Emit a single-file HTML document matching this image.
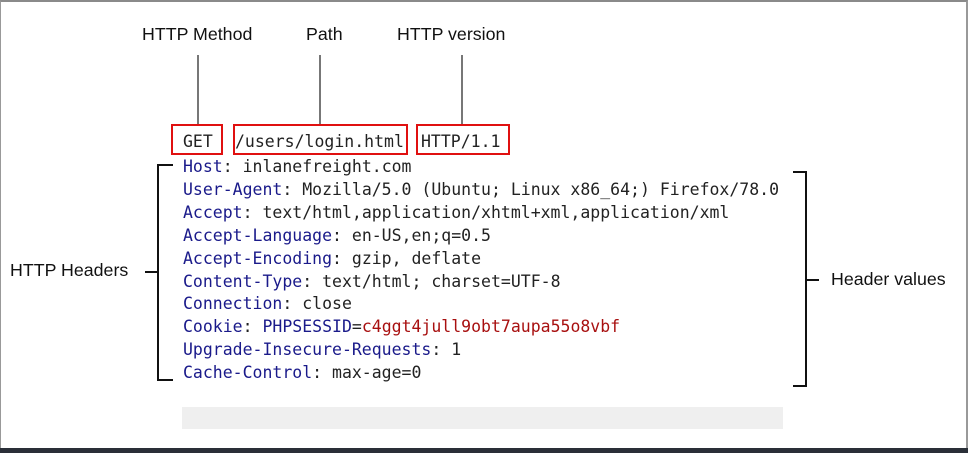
<!DOCTYPE html>
<html><head><style>
body{margin:0;width:968px;height:453px;background:#fff;position:relative;overflow:hidden}
.frame{position:absolute;left:0;top:0;width:965px;height:446px;border:1px solid #999;border-top:2px solid #8a8a8a;border-right:2px solid #999}
.bot{position:absolute;left:0;top:448px;width:968px;height:5px;background:#2a2f38}
.lbl{position:absolute;font-family:"Liberation Sans",sans-serif;font-size:17.8px;color:#111;white-space:nowrap}
.vl{position:absolute;width:2px;background:#777;top:55px;height:69px}
.rb{position:absolute;border:2px solid #e01010;box-sizing:border-box;top:124px;height:31px}
.code{position:absolute;left:183px;top:156px;font-family:"DejaVu Sans Mono",monospace;font-size:16.5px;line-height:22.9px;color:#222;white-space:pre}
.k{color:#1a1a8a}.r{color:#a81010}
.b{position:absolute;background:#111}
</style></head><body>
<div class="frame"></div><div class="bot"></div>
<div class="lbl" style="left:142px;top:24px">HTTP Method</div>
<div class="lbl" style="left:306px;top:24px">Path</div>
<div class="lbl" style="left:397px;top:24px">HTTP version</div>
<div class="vl" style="left:197px"></div>
<div class="vl" style="left:319px"></div>
<div class="vl" style="left:461px"></div>
<div class="rb" style="left:171px;width:52px"></div>
<div class="rb" style="left:233px;width:175px"></div>
<div class="rb" style="left:416px;width:94px"></div>
<div class="code" style="top:131px;left:183px">GET</div>
<div class="code" style="top:131px;left:235px">/users/login.html</div>
<div class="code" style="top:131px;left:421px">HTTP/1.1</div>
<div class="code"><span class="k">Host</span>: inlanefreight.com
<span class="k">User-Agent</span>: Mozilla/5.0 (Ubuntu; Linux x86_64;) Firefox/78.0
<span class="k">Accept</span>: text/html,application/xhtml+xml,application/xml
<span class="k">Accept-Language</span>: en-US,en;q=0.5
<span class="k">Accept-Encoding</span>: gzip, deflate
<span class="k">Content-Type</span>: text/html; charset=UTF-8
<span class="k">Connection</span>: close
<span class="k">Cookie</span>: <span class="k">PHPSESSID</span>=<span class="r">c4ggt4jull9obt7aupa55o8vbf</span>
<span class="k">Upgrade-Insecure-Requests</span>: 1
<span class="k">Cache-Control</span>: max-age=0</div>
<div class="b" style="left:157px;top:164px;width:2px;height:217px"></div>
<div class="b" style="left:157px;top:164px;width:16px;height:2px"></div>
<div class="b" style="left:157px;top:379px;width:16px;height:2px"></div>
<div class="b" style="left:145px;top:271px;width:13px;height:2px"></div>
<div class="lbl" style="left:10px;top:260px">HTTP Headers</div>
<div class="b" style="left:805px;top:171px;width:2px;height:216px"></div>
<div class="b" style="left:793px;top:171px;width:13px;height:2px"></div>
<div class="b" style="left:793px;top:385px;width:13px;height:2px"></div>
<div class="b" style="left:806px;top:279px;width:13px;height:2px"></div>
<div class="lbl" style="left:831px;top:269px">Header values</div>
<div style="position:absolute;left:182px;top:407px;width:601px;height:22px;background:#efefef"></div>
</body></html>
